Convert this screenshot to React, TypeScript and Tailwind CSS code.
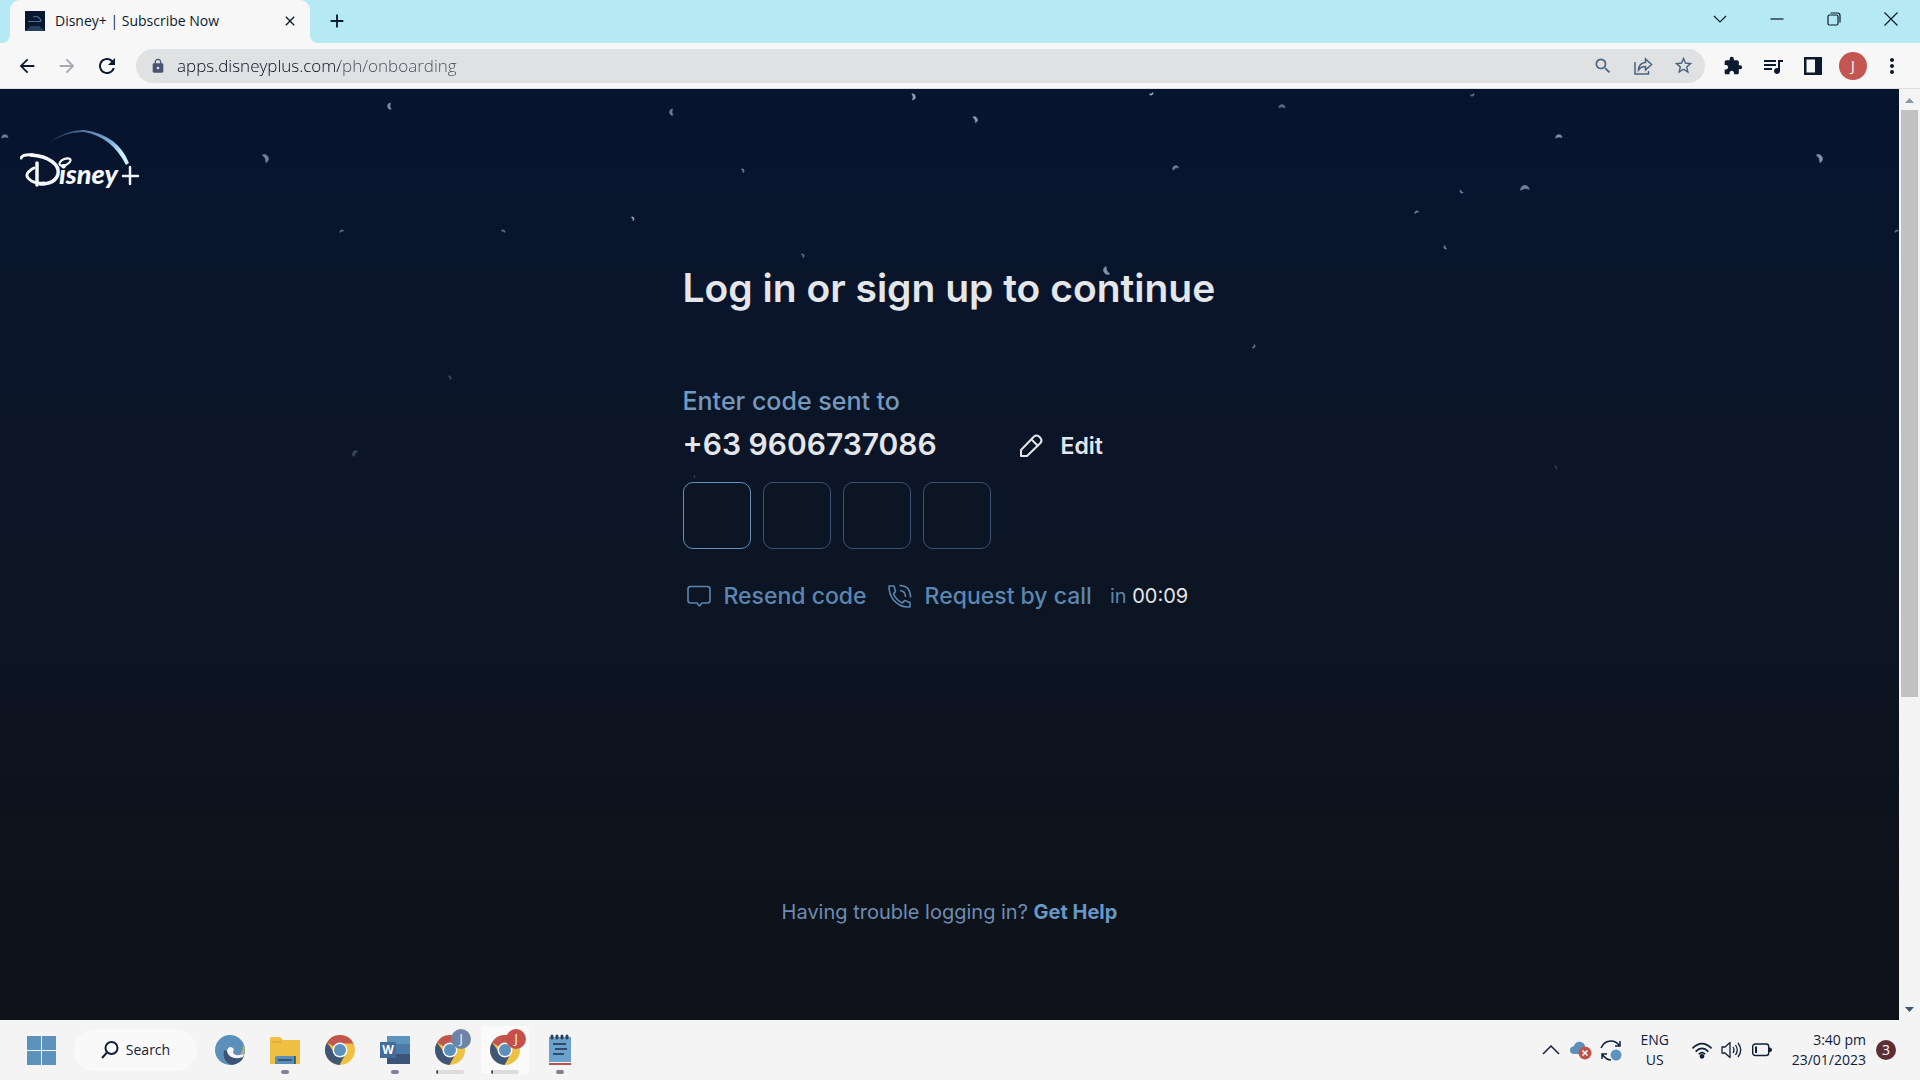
import type { ReactNode } from "react";
import {
  MdArrowBack,
  MdArrowForward,
  MdClose,
  MdAdd,
  MdRefresh,
  MdLock,
  MdSearch,
  MdStarBorder,
  MdExtension,
  MdQueueMusic,
  MdMoreVert,
} from "react-icons/md";

/* x, y, radius, opacity, rotation of each particle in the page backdrop */
const PARTICLES: [number, number, number, number, number][] = [
  [391, 17, 3, 0.7, 200],
  [912, 8, 3, 0.8, 20],
  [1151, 4, 2, 0.8, 90],
  [1472, 5, 2, 0.5, 90],
  [673, 23, 3, 0.6, 200],
  [974, 31, 3, 0.8, 0],
  [1282, 19, 3, 0.5, 300],
  [1559, 49, 3, 0.7, 290],
  [5, 49, 3, 0.6, 290],
  [264, 70, 4, 0.6, 0],
  [742, 82, 2, 0.6, 0],
  [1176, 80, 3, 0.6, 270],
  [1818, 70, 4, 0.7, 0],
  [1525, 101, 4, 0.6, 290],
  [1462, 102, 2, 0.6, 160],
  [1417, 124, 2, 0.6, 270],
  [632, 130, 2, 0.8, 0],
  [342, 143, 2, 0.5, 270],
  [503, 143, 2, 0.5, 320],
  [1446, 158, 2, 0.6, 180],
  [1897, 143, 2, 0.5, 270],
  [802, 167, 2, 0.5, 0],
  [1108, 181, 4, 0.7, 180],
  [1253, 257, 2, 0.5, 60],
  [449, 289, 2, 0.3, 0],
  [356, 365, 3, 0.3, 240],
  [694, 388, 1, 0.4, 0],
  [1555, 379, 2, 0.2, 0],
];

function Particles() {
  return (
    <svg className="pointer-events-none absolute inset-0 h-full w-full" aria-hidden="true">
      {PARTICLES.map(([x, y, r, o, a]) => (
        <g key={`${x}-${y}`} transform={`translate(${x} ${y}) rotate(${a}) scale(${r})`} opacity={o}>
          <path d="M-0.4 -1A1 1 0 0 1 0.5 0.9Q0.6 -0.3 -0.4 -1Z" fill="#b9cfe6" stroke="#8fabc9" strokeWidth="0.25" />
        </g>
      ))}
    </svg>
  );
}

function DisneyLogo() {
  return (
    <svg viewBox="0 0 124 72" className="h-[72px] w-[124px]" role="img" aria-label="Disney+">
      <defs>
        <linearGradient id="arc" x1="0" y1="0" x2="1" y2="0.5">
          <stop offset="0" stopColor="#3d5578" stopOpacity="0.3" />
          <stop offset="0.35" stopColor="#5577a3" />
          <stop offset="0.75" stopColor="#7fb0dc" />
          <stop offset="1" stopColor="#cdf3ff" />
        </linearGradient>
      </defs>
      <path d="M30 16Q46 4 64 4Q98 9 109 37L106 39Q92 11 64 6Q48 5 30 16Z" fill="url(#arc)" />
      <path d="M1 32Q3 28 13 29" fill="none" stroke="#f6f9fc" strokeWidth="3" strokeLinecap="round" />
      <ellipse cx="45" cy="36" rx="6" ry="3" transform="rotate(-25 45 36)" fill="none" stroke="#f6f9fc" strokeWidth="2.2" />
      <path d="M14 42Q3 48 9 53Q14 58 24 57" fill="none" stroke="#f6f9fc" strokeWidth="2.8" strokeLinecap="round" />
      <path d="M17 37V59" fill="none" stroke="#f6f9fc" strokeWidth="3.5" strokeLinecap="round" />
      <path
        d="M11 29C29 30 40 39 38 48C36 56 27 58 20 58"
        fill="none"
        stroke="#f6f9fc"
        strokeWidth="3.5"
        strokeLinecap="round"
      />
      <text x="39" y="58" fill="#f6f9fc" fontFamily="Lato, sans-serif" fontWeight="900" fontStyle="italic" fontSize="27">
        isney
      </text>
      <path d="M103 50H118M110 41V58" stroke="#eef6fb" strokeWidth="2.5" strokeLinecap="round" />
    </svg>
  );
}

function Chrome({ className }: { className: string }) {
  return (
    <svg viewBox="0 0 30 30" className={className} aria-hidden="true">
      <circle cx="15" cy="15" r="15" fill="#efc143" />
      <path d="M15 15L2 7.500A15 15 0 0 1 28.500 8.500H15Z" fill="#c2564f" />
      <path d="M2 7.500A15 15 0 0 0 14.500 30L20.500 19L9 17Z" fill="#3f5676" />
      <circle cx="15" cy="15" r="7.500" fill="#f7f7f7" />
      <circle cx="15" cy="15" r="6" fill="#5b90bb" />
    </svg>
  );
}

function TaskButton({ label, mark, active, children }: { label: string; mark?: "dot" | "bar"; active?: boolean; children: ReactNode }) {
  return (
    <button
      aria-label={label}
      className={
        active
          ? "relative flex h-12 w-12 items-center justify-center rounded bg-[#fafafa]"
          : "relative flex h-12 w-12 items-center justify-center rounded"
      }
    >
      {children}
      {mark === "dot" && <span className="absolute bottom-0 h-1 w-2 rounded-full bg-[#857f92]" />}
      {mark === "bar" && <span className="absolute bottom-0 h-1 w-7 rounded-full border-l-2 border-[#3f4a66] bg-[#dcdcdc]" />}
    </button>
  );
}

function TitleBar() {
  return (
    <header className="flex h-[43px] items-end bg-[#b5e9f4] text-[#0c1a30]">
      <span className="h-[43px] w-[10px] bg-[#f7f7f7]">
        <span className="block h-full rounded-br-lg bg-[#b5e9f4]" />
      </span>
      <div className="flex h-[43px] w-[300px] items-center rounded-t-[10px] bg-[#f7f7f7] pr-3 pb-[2px] pl-[15px]">
        <svg viewBox="0 0 20 20" className="mr-[10px] h-5 w-5" aria-hidden="true">
          <path d="M0 0H20V20H0Z" fill="#0a1730" />
          <path d="M8 6Q14 4 16 10M3 10.500H16" fill="none" stroke="#4f719a" strokeWidth="1.200" />
          <path d="M0 20L6 15H14L20 20Z" fill="#27405f" />
        </svg>
        <span className="flex-1 text-sm">Disney+ | Subscribe Now</span>
        <button aria-label="Close tab">
          <MdClose className="h-4 w-4" />
        </button>
      </div>
      <span className="h-[43px] w-[10px] bg-[#f7f7f7]">
        <span className="block h-full rounded-bl-lg bg-[#b5e9f4]" />
      </span>
      <button aria-label="New tab" className="flex h-[43px] w-[34px] items-center justify-center pb-[2px]">
        <MdAdd className="h-[22px] w-[22px]" />
      </button>
      <div className="ml-auto flex h-[37px] items-center self-start">
        <button aria-label="Search tabs" className="flex w-[57px] justify-center">
          <svg viewBox="0 0 14 14" className="h-[14px] w-[14px]" fill="none" stroke="currentColor" strokeWidth="1.200">
            <path d="M1 4L7 10L13 4" />
          </svg>
        </button>
        <button aria-label="Minimize" className="flex w-[57px] justify-center">
          <svg viewBox="0 0 14 14" className="h-[14px] w-[14px]" stroke="currentColor" strokeWidth="1.200">
            <path d="M0.500 7H13.500" />
          </svg>
        </button>
        <button aria-label="Restore" className="flex w-[57px] justify-center">
          <svg viewBox="0 0 14 14" className="h-[14px] w-[14px]" fill="none" stroke="currentColor" strokeWidth="1.200">
            <rect x="1" y="3" width="10" height="10" rx="1.500" />
            <path d="M3.500 1H10.500Q13 1 13 3.500V10.500" />
          </svg>
        </button>
        <button aria-label="Close window" className="flex w-[58px] justify-center">
          <svg viewBox="0 0 14 14" className="h-[14px] w-[14px]" stroke="currentColor" strokeWidth="1.200">
            <path d="M0.500 0.500L13.500 13.500M13.500 0.500L0.500 13.500" />
          </svg>
        </button>
      </div>
    </header>
  );
}

function ToolBar() {
  return (
    <nav className="flex h-[46px] items-center border-b border-[#dcdddf] bg-[#f7f7f7] text-[#0c1a30]">
      <button aria-label="Back" className="ml-[7px] flex w-10 justify-center">
        <MdArrowBack className="h-[22px] w-[22px]" />
      </button>
      <button aria-label="Forward" className="flex w-10 justify-center text-[#a6a8ad]">
        <MdArrowForward className="h-[22px] w-[22px]" />
      </button>
      <button aria-label="Reload" className="flex w-10 justify-center">
        <MdRefresh className="h-6 w-6" />
      </button>
      <div className="ml-[9px] flex h-[34px] flex-1 items-center rounded-full bg-[#dfe1e3] pr-[2px] pl-[14px] text-[#48617f]">
        <MdLock className="h-4 w-4 text-[#475571]" />
        <input
          aria-label="Address"
          className="ml-[11px] h-7 flex-1 bg-[linear-gradient(90deg,#050d1c_163px,#464c58_163px)] bg-clip-text text-[17px] font-light text-transparent outline-none"
          defaultValue="apps.disneyplus.com/ph/onboarding"
        />
        <button aria-label="Zoom" className="flex w-10 justify-center">
          <MdSearch className="h-5 w-5" />
        </button>
        <button aria-label="Share" className="flex w-10 justify-center">
          <svg viewBox="0 0 20 20" className="h-5 w-5" fill="none" stroke="currentColor" strokeWidth="1.500">
            <path d="M2 6V18H15.500V15" />
            <path d="M5.500 14Q6 7 12.500 6.500V3L18.500 8.500L12.500 14V10.500Q8 10.500 5.500 14Z" />
          </svg>
        </button>
        <button aria-label="Bookmark" className="flex w-10 justify-center">
          <MdStarBorder className="h-[21px] w-[21px]" />
        </button>
      </div>
      <div className="mr-[9px] ml-2 flex items-center">
        <button aria-label="Extensions" className="flex w-10 justify-center">
          <MdExtension className="h-5 w-5" />
        </button>
        <button aria-label="Media controls" className="flex w-10 justify-center">
          <MdQueueMusic className="h-6 w-6" />
        </button>
        <button aria-label="Side panel" className="flex w-10 justify-center">
          <svg viewBox="0 0 18 18" className="h-[18px] w-[18px]">
            <path d="M0 0H18V18H0ZM2.500 2.500V15.500H11V2.500Z" fill="currentColor" fillRule="evenodd" />
          </svg>
        </button>
        <button
          aria-label="Profile J"
          className="mx-[6px] flex h-7 w-7 items-center justify-center rounded-full bg-[#c35650] text-sm text-white"
        >
          J
        </button>
        <button aria-label="Menu" className="flex w-[38px] justify-center">
          <MdMoreVert className="h-6 w-6" />
        </button>
      </div>
    </nav>
  );
}

function LoginPage() {
  return (
    <main className="relative flex-1 overflow-hidden bg-linear-to-b from-[#07142f] via-[#0c1524] to-[#0e1118] font-['Inter',sans-serif]">
      <Particles />
      <div className="relative flex h-full flex-col">
        <a href="#home" className="mt-[37px] ml-5 w-fit">
          <DisneyLogo />
        </a>
        <div className="mx-auto w-full max-w-[534px]">
          <h1 className="mt-[66px] text-[39px] leading-[48px] font-semibold whitespace-nowrap text-[#e4e6e9]">Log in or sign up to continue</h1>
          <p className="mt-[73px] text-[25px] leading-8 font-medium text-[#7799bd]">Enter code sent to</p>
          <div className="mt-[7px] flex items-end">
            <span className="w-[334px] text-[30px] leading-10 font-semibold text-[#e4e6e9]">+63 9606737086</span>
            <button className="flex items-center gap-4 text-[23px] leading-9 font-semibold text-[#e4e6e9]">
              <svg viewBox="0 0 28 28" className="h-7 w-7" fill="none" stroke="currentColor" strokeWidth="2" strokeLinejoin="round">
                <path d="M4 24V18L17 4.500Q19.500 2.500 22 4.500L23.500 6Q25.500 8.500 23.500 11L10 24Z" />
                <path d="M14.500 7.500L20.500 13.500" />
              </svg>
              Edit
            </button>
          </div>
          <div className="mt-[18px] flex gap-3">
            {[1, 2, 3, 4].map((n) => (
              <input
                key={n}
                aria-label={`Digit ${n}`}
                inputMode="numeric"
                maxLength={1}
                className={
                  n === 1
                    ? "h-[67px] w-[68px] rounded-[10px] border border-[#6290bb] bg-[#0c1524] text-center text-2xl text-white outline-none"
                    : "h-[67px] w-[68px] rounded-[10px] border border-[#3c5273] bg-[#0c1524] text-center text-2xl text-white outline-none"
                }
              />
            ))}
          </div>
          <div className="mt-[31px] flex items-center whitespace-nowrap text-[#5b86b0]">
            <button className="ml-[2px] flex items-center gap-[11px] text-[23px] leading-8 font-medium">
              <svg viewBox="0 0 28 28" className="h-7 w-7" fill="none" stroke="currentColor" strokeWidth="1.600" strokeLinejoin="round">
                <path d="M5.500 4.500H22.500Q25 4.500 25 7V18.500Q25 21 22.500 21H17L14.500 24L12 21H5.500Q3 21 3 18.500V7Q3 4.500 5.500 4.500Z" />
              </svg>
              Resend code
            </button>
            <button className="ml-[19px] flex items-center gap-[11px] text-[23px] leading-8 font-medium">
              <svg viewBox="0 0 28 28" className="h-7 w-7" fill="none" stroke="currentColor" strokeWidth="1.600" strokeLinejoin="round">
                <path d="M3 4H8L9.500 9.500L7.500 12Q10 18 16.500 21L18.500 18.500L24 20.500V25H21Q13 24.500 7.500 18Q3 12 3 4Z" />
                <path d="M13.500 3.500Q24.500 3.500 24.500 15.500M14 8.500Q19.500 9 19.500 15" />
              </svg>
              Request by call
            </button>
            <span className="ml-[18px] text-xl leading-8">
              in <span className="text-[#e4e6e9]">00:09</span>
            </span>
          </div>
        </div>
        <p className="mt-auto mb-[92px] text-center text-xl leading-8 text-[#6d8db3]">
          Having trouble logging in?{" "}
          <a href="#help" className="font-bold text-[#6797c4]">
            Get Help
          </a>
        </p>
      </div>
    </main>
  );
}

function ScrollBar() {
  return (
    <div className="flex w-[21px] flex-col bg-[#f4f4f4] px-[2px]" aria-hidden="true">
      <svg viewBox="0 0 17 21" className="h-[21px] w-[17px]">
        <path d="M4 14L8.500 9L13 14Z" fill="#8a97aa" />
      </svg>
      <div className="flex flex-1 flex-col">
        <div className="h-[66%] bg-[#c1c1c1]" />
      </div>
      <svg viewBox="0 0 17 21" className="h-[21px] w-[17px]">
        <path d="M4 8L8.500 13L13 8Z" fill="#3f5573" />
      </svg>
    </div>
  );
}

function TaskBar() {
  return (
    <footer className="flex h-[60px] items-center bg-[#f4f4f4] pr-6 pl-[17px] text-[#10203a]">
      <button aria-label="Start" className="flex h-12 w-12 items-center justify-center">
        <svg viewBox="0 0 29 29" className="h-[29px] w-[29px]" fill="#5e92bb">
          <path d="M0 0H14V14H0ZM15 0H29V14H15ZM0 15H14V29H0ZM15 15H29V29H15Z" />
        </svg>
      </button>
      <button className="ml-[9px] flex h-[42px] w-[123px] items-center justify-center gap-[7px] rounded-full bg-[#f9f9f9] text-sm">
        <svg viewBox="0 0 18 18" className="h-[18px] w-[18px]" fill="none" stroke="currentColor" strokeWidth="2">
          <circle cx="10.500" cy="7" r="6" />
          <path d="M6 11.500L1 17" />
        </svg>
        Search
      </button>
      <div className="ml-[9px] flex items-center gap-[7px]">
        <TaskButton label="Edge">
          <svg viewBox="0 0 30 30" className="h-[30px] w-[30px]">
            <circle cx="15" cy="15" r="15" fill="#5c90ba" />
            <path d="M9 15Q7 27 17 30Q26 29 29 21Q19 26 14 17Z" fill="#3b5475" />
            <path d="M12 17Q12 12 16 12Q20 13 18 17Q19 22 29 19L28 22Q16 26 12 17Z" fill="#f5f5f5" />
            <path d="M28 8Q31 13 29 18L25 20Q29 13 28 8Z" fill="#b9b068" />
          </svg>
        </TaskButton>
        <TaskButton label="File Explorer" mark="dot">
          <svg viewBox="0 0 30 30" className="h-[30px] w-[30px]">
            <path d="M0 3Q0 2 1 2H10L13 5H29Q30 5 30 6V28Q30 29 29 29H1Q0 29 0 28Z" fill="#efc044" />
            <path d="M2 7H12" stroke="#d08a3c" strokeDasharray="1.500 1" />
            <path d="M5 29V23Q5 21 7 21H25V29Z" fill="#5b8fb9" />
            <path d="M8 25H22M25 21V29" stroke="#2d4666" strokeWidth="1.500" />
          </svg>
        </TaskButton>
        <TaskButton label="Google Chrome">
          <Chrome className="h-[30px] w-[30px]" />
        </TaskButton>
        <TaskButton label="Word" mark="dot">
          <span className="relative flex h-[30px] w-[30px] items-center">
            <svg viewBox="0 0 30 30" className="absolute inset-0 h-[30px] w-[30px]">
              <path d="M7 1H30V10H7Z" fill="#5d93bd" />
              <path d="M7 9H30V19H7Z" fill="#4c7ba7" />
              <path d="M7 19H30V29H7Z" fill="#3c5577" />
              <path d="M0 7H16V23H0Z" fill="#426c99" />
            </svg>
            <span className="relative w-4 text-center text-xs font-bold text-white">W</span>
          </span>
        </TaskButton>
        <TaskButton label="Chrome, profile J" mark="bar">
          <Chrome className="h-[30px] w-[30px]" />
          <span className="absolute top-[3px] right-[3px] flex h-5 w-5 items-center justify-center rounded-full bg-[#6e83a5] text-xs text-white">
            J
          </span>
        </TaskButton>
        <TaskButton label="Chrome, profile J, active" mark="bar" active>
          <Chrome className="h-[30px] w-[30px]" />
          <span className="absolute top-[3px] right-[3px] flex h-5 w-5 items-center justify-center rounded-full bg-[#c5504b] text-xs text-white">
            J
          </span>
        </TaskButton>
        <TaskButton label="Notepad" mark="dot">
          <svg viewBox="0 0 24 32" className="h-8 w-6">
            <path d="M1 3H23V28H1Z" fill="#6ba2cb" />
            <path d="M1 28H23V30H1Z" fill="#f7f7f7" />
            <path d="M1 30H23" stroke="#b8524a" strokeWidth="2" />
            <path d="M5 10H18M7 15H19M5 20H16" stroke="#314a6b" strokeWidth="2" />
            <path d="M4 2V4M9 2V4M14 2V4M19 2V4" stroke="#2c3f5c" strokeWidth="3" strokeLinecap="round" />
          </svg>
        </TaskButton>
      </div>
      <div className="ml-auto flex items-center">
        <button aria-label="Show hidden icons">
          <svg viewBox="0 0 18 12" className="h-3 w-[18px]" fill="none" stroke="currentColor" strokeWidth="1.500">
            <path d="M1 10L9 2L17 10" />
          </svg>
        </button>
        <svg viewBox="0 0 22 20" className="ml-[10px] h-5 w-[22px]" role="img" aria-label="OneDrive error">
          <path d="M4 14Q0 14 0 10Q0 7 4 6Q6 1 11 2Q15 3 15 7V14Z" fill="#5c8fb9" />
          <circle cx="15" cy="13" r="6.500" fill="#c0524c" />
          <path d="M12.500 10.500L17.500 15.500M17.500 10.500L12.500 15.500" stroke="#fff" strokeWidth="1.500" />
        </svg>
        <svg viewBox="0 0 22 22" className="ml-2 h-[22px] w-[22px]" role="img" aria-label="Sync">
          <path
            d="M1 9Q4 2 11 2Q16 2 20 7M20 2V7H15M2 20V15H7M2 15Q6 21 11 21"
            fill="none"
            stroke="currentColor"
            strokeWidth="1.500"
          />
          <circle cx="16" cy="16" r="5.500" fill="#5b94c1" />
        </svg>
        <button className="ml-[13px] w-10 text-center text-sm leading-5">
          ENG
          <br />
          US
        </button>
        <svg viewBox="0 0 20 16" className="ml-4 h-[17px] w-[22px]" fill="none" stroke="currentColor" strokeWidth="1.500" role="img" aria-label="Wi-Fi">
          <path d="M1 6Q10 -3 19 6M4 9Q10 3 16 9M7 11.500Q10 8.500 13 11.500" />
          <circle cx="10" cy="13.500" r="1.500" fill="currentColor" />
        </svg>
        <svg viewBox="0 0 21 18" className="ml-2 h-[18px] w-[21px]" fill="none" stroke="currentColor" strokeWidth="1.300" role="img" aria-label="Volume">
          <path d="M1 6H4L9 1.500V16.500L4 12H1Z" strokeLinejoin="round" />
          <path d="M12 6Q14 9 12 12M14.500 4Q18 9 14.500 14M17 2Q22.500 9 17 16" />
        </svg>
        <svg viewBox="0 0 20 14" className="ml-[10px] h-[14px] w-5" role="img" aria-label="Battery">
          <rect x="0.700" y="1" width="16" height="11.500" rx="2.500" fill="none" stroke="currentColor" strokeWidth="1.400" />
          <path d="M3 3.500H5V10H3ZM17 4.500H18Q20 4.500 20 7Q20 9 18 9H17Z" fill="currentColor" />
        </svg>
        <button className="ml-5 text-right text-sm leading-5">
          3:40 pm
          <br />
          23/01/2023
        </button>
        <button
          aria-label="3 notifications"
          className="ml-[10px] flex h-5 w-5 items-center justify-center rounded-full bg-[#5e2e36] text-sm text-white"
        >
          3
        </button>
      </div>
    </footer>
  );
}

export default function App() {
  return (
    <div className="flex h-screen flex-col overflow-hidden font-['Open_Sans','Noto_Sans',sans-serif]">
      <TitleBar />
      <ToolBar />
      <div className="flex min-h-0 flex-1">
        <LoginPage />
        <ScrollBar />
      </div>
      <TaskBar />
    </div>
  );
}
